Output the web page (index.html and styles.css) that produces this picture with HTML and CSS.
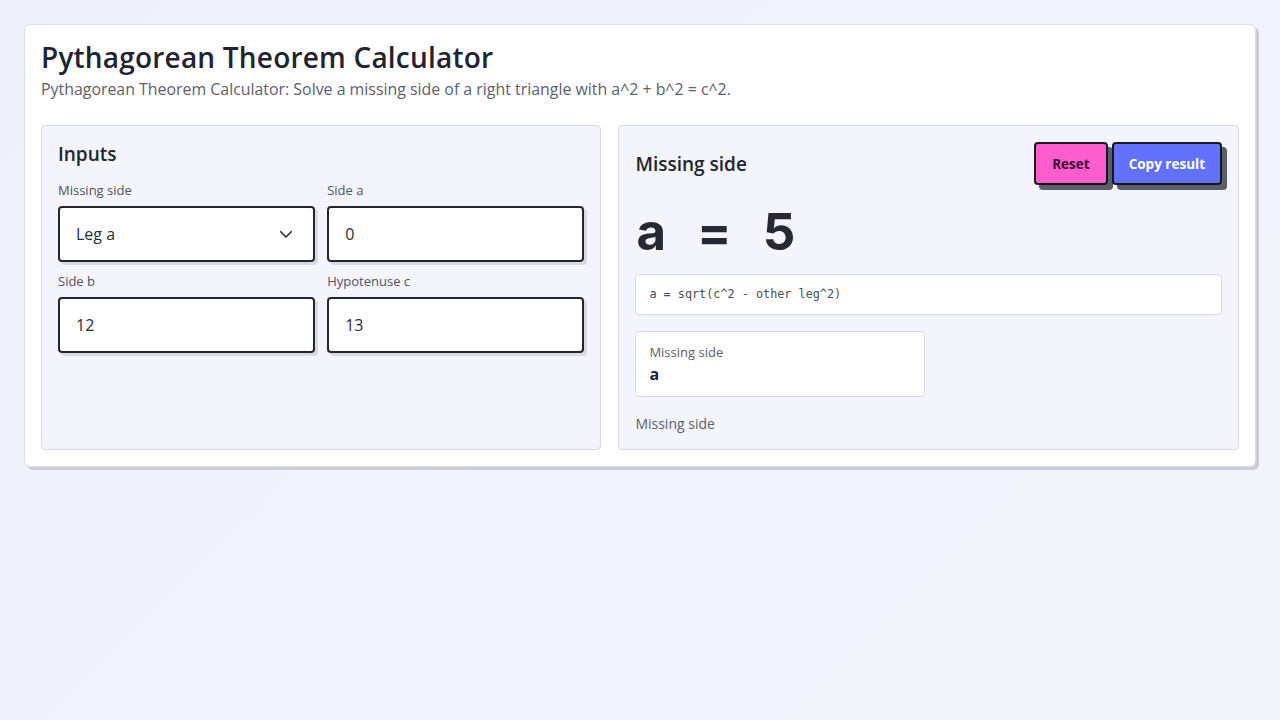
FILE: index.html
```html
<!DOCTYPE html>
<html lang="en">
<head>
  <meta charset="UTF-8">
  <title>Pythagorean Theorem Calculator</title>
  <link rel="stylesheet" href="styles.css">
</head>
<body>

<div class="card">
  <h1>Pythagorean Theorem Calculator</h1>
  <p class="lead">Pythagorean Theorem Calculator: Solve a missing side of a right triangle with a^2 + b^2 = c^2.</p>

  <div class="layout">
    <!-- inputs -->
    <section class="panel">
      <h2>Inputs</h2>
      <div class="fields">
        <label class="field">
          <span class="field-label">Missing side</span>
          <div class="select-box">
            <span>Leg a</span>
            <svg width="18" height="18" viewBox="0 0 24 24" fill="none" stroke="#2a2d36" stroke-width="2.2" stroke-linecap="round" stroke-linejoin="round"><polyline points="5 9 12 16 19 9"></polyline></svg>
          </div>
        </label>
        <label class="field">
          <span class="field-label">Side a</span>
          <input value="0">
        </label>
        <label class="field">
          <span class="field-label">Side b</span>
          <input value="12">
        </label>
        <label class="field">
          <span class="field-label">Hypotenuse c</span>
          <input value="13">
        </label>
      </div>
    </section>

    <!-- result -->
    <section class="panel">
      <div class="result-head">
        <h2>Missing side</h2>
        <div class="actions">
          <button class="btn btn-pink">Reset</button>
          <button class="btn btn-blue">Copy result</button>
        </div>
      </div>
      <div class="big-result">
        <span>a</span><span>=</span><span>5</span>
      </div>
      <div class="formula">a = sqrt(c^2 - other leg^2)</div>
      <div class="stats">
        <div class="stat">
          <div class="stat-label">Missing side</div>
          <div class="stat-value">a</div>
        </div>
      </div>
      <p class="note">Missing side</p>
    </section>
  </div>
</div>

</body>
</html>
```

FILE: styles.css
```css
body {
  margin: 0;
  padding: 24px;
  min-height: 720px;
  box-sizing: border-box;
  background: linear-gradient(135deg, #eef0fa 0%, #f2f3fc 50%, #f3f3fc 100%);
  font-family: "Open Sans", "Noto Sans", sans-serif;
  color: #1f2430;
}

.card {
  background: #fff;
  border: 1px solid #dcdee8;
  border-radius: 6px;
  padding: 16px;
  box-shadow: 3px 3px 0 #cbcdd4;
}

h1 {
  margin: 0;
  font-size: 28px;
  font-weight: 600;
  line-height: 33px;
  letter-spacing: 0.2px;
}

.lead {
  margin: 5px 0 0;
  font-size: 15.9px;
  line-height: 20px;
  color: #5c606c;
}

.layout {
  display: grid;
  grid-template-columns: 0.903fr 1fr;
  gap: 17px;
  margin-top: 26px;
}

.panel {
  background: #f3f4fc;
  border: 1px solid #d8dae3;
  border-radius: 4px;
  padding: 16px;
}

h2 {
  margin: 0;
  font-size: 19px;
  font-weight: 600;
  line-height: 24px;
}

.fields {
  display: grid;
  grid-template-columns: 1fr 1fr;
  gap: 12px;
  margin-top: 17px;
}

.field {
  display: flex;
  flex-direction: column;
  gap: 8px;
}

.field-label {
  font-size: 13px;
  line-height: 15px;
  color: #4f5360;
}

input, .select-box {
  height: 56px;
  box-sizing: border-box;
  border: 2px solid #23262e;
  border-radius: 4px;
  background: #fff;
  padding: 0 16px;
  font-family: "Open Sans", "Noto Sans", sans-serif;
  font-size: 16px;
  color: #2a2d36;
  box-shadow: 3px 3px 0 #d9dbe3;
  outline: none;
  width: 100%;
}

.select-box {
  display: flex;
  align-items: center;
  justify-content: space-between;
  padding-right: 18px;
}

.result-head {
  display: flex;
  justify-content: space-between;
  align-items: center;
}

.actions {
  display: flex;
  gap: 4px;
}

.btn {
  height: 43px;
  border: 2px solid #15171d;
  border-radius: 4px;
  padding: 0 16px;
  font-family: "Open Sans", "Noto Sans", sans-serif;
  font-size: 13.5px;
  font-weight: 700;
  box-shadow: 5px 5px 0 #5b5e69;
  cursor: pointer;
}

.btn-pink { background: #ff5ccd; color: #3a0f2e; }
.btn-blue { background: #6271fc; color: #fff; padding: 0 15px; }

.big-result {
  display: flex;
  gap: 31px;
  margin-top: 20px;
  font-family: "Inter", "Roboto", sans-serif;
  font-size: 51px;
  font-weight: 700;
  line-height: 54px;
  color: #262933;
  padding-left: 1px;
}

.formula {
  margin-top: 15px;
  background: #fff;
  border: 1px solid #d8dae3;
  border-radius: 4px;
  padding: 12px 13px;
  font-family: "DejaVu Sans Mono", monospace;
  font-size: 11.8px;
  line-height: 15px;
  color: #4a4d56;
}

.stats {
  display: grid;
  grid-template-columns: 1fr 1fr;
  gap: 8px;
  margin-top: 16px;
}

.stat {
  background: #fff;
  border: 1px solid #d8dae3;
  border-radius: 4px;
  padding: 12px 13px;
}

.stat-label {
  font-size: 13px;
  line-height: 16px;
  color: #5c606c;
}

.stat-value {
  margin-top: 4px;
  font-size: 16px;
  font-weight: 700;
  line-height: 20px;
}

.note {
  margin: 18px 0 0;
  font-size: 14px;
  line-height: 18px;
  color: #5c606c;
}
```
